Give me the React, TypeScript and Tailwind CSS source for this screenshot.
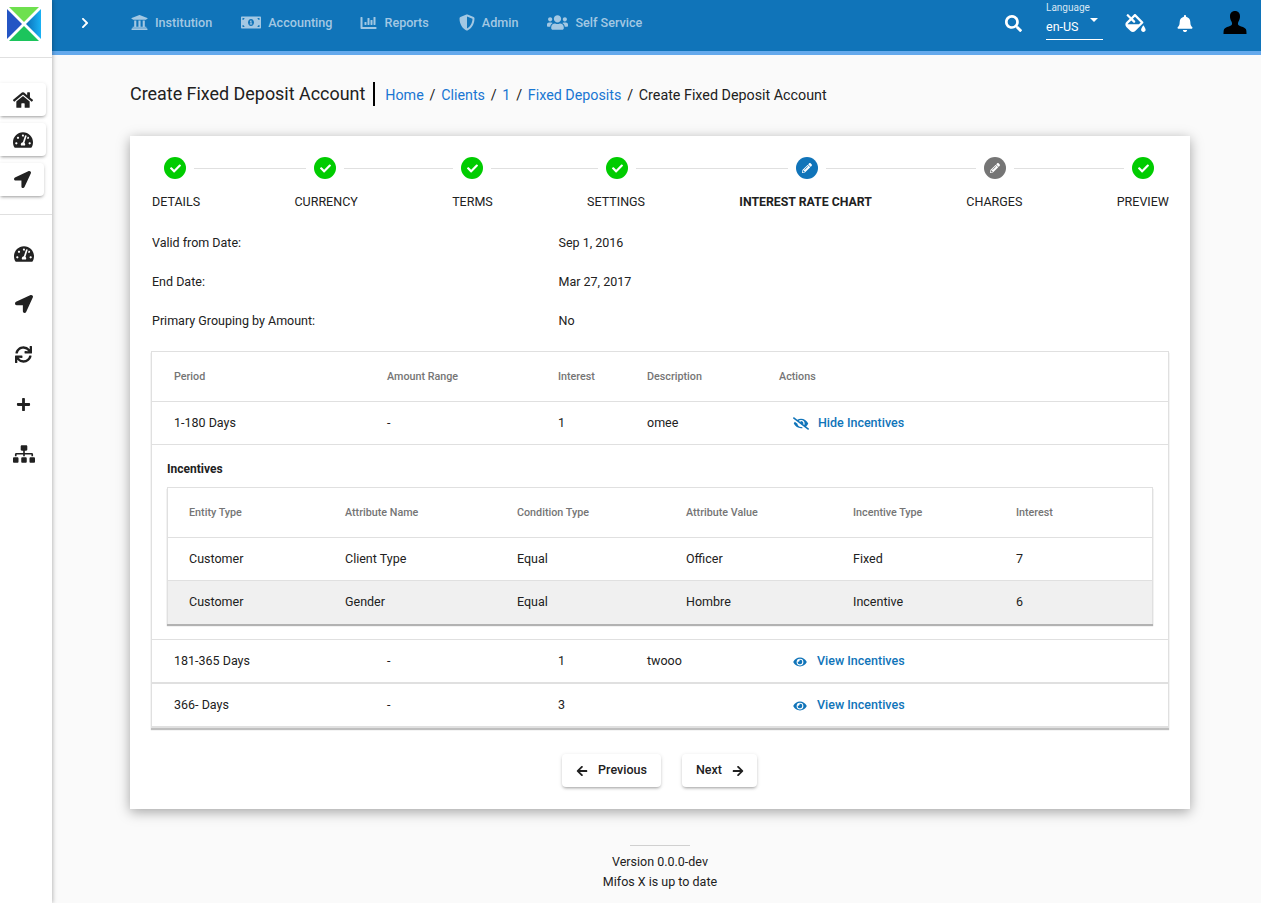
import {
	FaArrowLeft,
	FaArrowRight,
	FaBell,
	FaChartBar,
	FaCheck,
	FaChevronRight,
	FaEye,
	FaEyeSlash,
	FaFillDrip,
	FaHome,
	FaLocationArrow,
	FaMoneyBillAlt,
	FaPencilAlt,
	FaPlus,
	FaSearch,
	FaShieldAlt,
	FaSitemap,
	FaSync,
	FaTachometerAlt,
	FaUniversity,
	FaUsers,
} from "react-icons/fa";

const navItems = [
	{ label: "Institution", icon: FaUniversity, iconClass: "w-[17px] h-[17px]", cls: "ml-0" },
	{ label: "Accounting", icon: FaMoneyBillAlt, iconClass: "w-[20px] h-[17px]", cls: "ml-[29px]" },
	{ label: "Reports", icon: FaChartBar, iconClass: "w-[17px] h-[16px]", cls: "ml-[28px]" },
	{ label: "Admin", icon: FaShieldAlt, iconClass: "w-[16px] h-[17px]", cls: "ml-[30px]" },
	{ label: "Self Service", icon: FaUsers, iconClass: "w-[21px] h-[17px]", cls: "ml-[29px]" },
];

const steps = [
	{ label: "DETAILS", done: true },
	{ label: "CURRENCY", done: true },
	{ label: "TERMS", done: true },
	{ label: "SETTINGS", done: true },
	{ label: "INTEREST RATE CHART", active: true },
	{ label: "CHARGES", pending: true },
	{ label: "PREVIEW", done: true },
];

const lineWidths = ["w-[112px]", "w-[109px]", "w-[107px]", "w-[152px]", "w-[150px]", "w-[110px]"];

const outerCols = "grid grid-cols-[213px_171px_89px_132px_1fr] items-center pl-[22px]";
const innerCols = "grid grid-cols-[156px_172px_169px_167px_163px_1fr] items-center pl-[21px]";

const incentiveRows = [
	["Customer", "Client Type", "Equal", "Officer", "Fixed", "7"],
	["Customer", "Gender", "Equal", "Hombre", "Incentive", "6"],
];

function Logo() {
	return (
		<svg viewBox="0 0 34 34" className="w-[34px] h-[34px]">
			<defs>
				<linearGradient id="logoRight" x1="0" y1="0" x2="1" y2="0">
					<stop offset="0" stopColor="#0b6fb8" />
					<stop offset="1" stopColor="#1ab2f5" />
				</linearGradient>
			</defs>
			<polygon points="2,0 32,0 17,15" fill="#6ee04e" />
			<polygon points="2,34 32,34 17,19" fill="#1cc45c" />
			<polygon points="0,2 0,32 15,17" fill="#2455c4" />
			<polygon points="34,2 34,32 19,17" fill="url(#logoRight)" />
		</svg>
	);
}

function UserSilhouette() {
	return (
		<svg viewBox="0 0 24 24" className="w-[24px] h-[24px]" fill="#000">
			<path d="M12 0c-3.200 0-5 2.100-5 5.200 0 2 .5 3.400 1.200 4.700.4.700.7 1.200.8 2 .2 1.400-.2 2.200-1.500 2.900-1.800.9-5.300 1.600-6.300 3.300C.5 19.400.500 21.500.5 23h23c0-1.500 0-3.600-.7-4.900-1-1.700-4.500-2.400-6.300-3.300-1.300-.7-1.700-1.500-1.500-2.900.1-.8.400-1.300.8-2C16.500 8.600 17 7.200 17 5.200 17 2.100 15.200 0 12 0z" />
		</svg>
	);
}

function Sidebar() {
	const cardIcons = [
		{ icon: FaHome, cls: "w-[20px] h-[18px]", width: "w-[46px]" },
		{ icon: FaTachometerAlt, cls: "w-[20px] h-[18px]", width: "w-[46px]" },
		{ icon: FaLocationArrow, cls: "w-[17px] h-[17px]", width: "w-[44px]" },
	];
	const plainIcons = [
		{ icon: FaTachometerAlt, cls: "w-[20px] h-[18px]" },
		{ icon: FaLocationArrow, cls: "w-[18px] h-[18px]" },
		{ icon: FaSync, cls: "w-[17px] h-[17px]" },
		{ icon: FaPlus, cls: "w-[15px] h-[15px]" },
		{ icon: FaSitemap, cls: "w-[22px] h-[18px]" },
	];
	return (
		<aside className="w-[52px] shrink-0 bg-white shadow-[1px_0_4px_rgba(0,0,0,0.25)] z-10 flex flex-col">
			<div className="h-[58px] border-b border-[#e0e0e0] flex items-center justify-center pr-[5px] pb-[9px]">
				<Logo />
			</div>
			<div className="flex flex-col gap-[7px] pt-[25px] pb-[18px] border-b border-[#e0e0e0]">
				{cardIcons.map((item, i) => {
					const Icon = item.icon;
					return (
						<div
							key={i}
							className={`${item.width} h-[33px] bg-white rounded-r-[4px] shadow-[0_2px_3px_-1px_rgba(0,0,0,0.3),0_1px_4px_rgba(0,0,0,0.12)] flex items-center justify-center text-[#212121]`}
						>
							<Icon className={item.cls} />
						</div>
					);
				})}
			</div>
			<div className="flex flex-col pt-[14px] text-[#212121]">
				{plainIcons.map((item, i) => {
					const Icon = item.icon;
					return (
						<div key={i} className="h-[50px] flex items-center justify-center pr-[5px]">
							<Icon className={item.cls} />
						</div>
					);
				})}
			</div>
		</aside>
	);
}

function Topbar() {
	return (
		<header className="h-[55px] bg-[#1074b9] border-b-[4px] border-[#64a9ec] flex items-center shrink-0 pb-[5px]">
			<FaChevronRight className="ml-[28px] w-[10px] h-[12px] text-white" />
			<nav className="flex items-center ml-[41px]">
				{navItems.map((item) => {
					const Icon = item.icon;
					return (
						<div key={item.label} className={`flex items-center gap-[7px] text-[#a3c8e3] text-[12.6px] font-medium ${item.cls}`}>
							<Icon className={item.iconClass} />
							<span>{item.label}</span>
						</div>
					);
				})}
			</nav>
			<div className="ml-auto flex items-center text-white">
				<FaSearch className="w-[17px] h-[17px]" />
				<div className="ml-[24px] mb-[5px] w-[57px] h-[39px] border-b border-white relative">
					<div className="text-[10px] leading-[12px] mt-[1px] text-[#d6e6f3]">Language</div>
					<div className="text-[12.5px] leading-[14px] mt-[6px]">en-US</div>
					<div className="absolute right-[5px] top-[17px] border-x-[4px] border-x-transparent border-t-[4px] border-t-white" />
				</div>
				<FaFillDrip className="ml-[22px] w-[21px] h-[18px]" />
				<FaBell className="ml-[31px] w-[16px] h-[17px]" />
				<div className="ml-[30px] mr-[14px]">
					<UserSilhouette />
				</div>
			</div>
		</header>
	);
}

function Stepper() {
	return (
		<div>
			<div className="flex items-center h-[22px] pl-[34px]">
				{steps.map((step, i) => (
					<div key={step.label} className="flex items-center">
						<div
							className={`w-[22px] h-[22px] rounded-full flex items-center justify-center text-white ${
								step.active ? "bg-[#1074b9]" : step.pending ? "bg-[#757575]" : "bg-[#00cc00]"
							}`}
						>
							{step.done ? <FaCheck className="w-[11px] h-[11px]" /> : <FaPencilAlt className="w-[10px] h-[10px]" />}
						</div>
						{i < lineWidths.length && <div className={`h-px bg-[#e0e0e0] mx-[8px] ${lineWidths[i]}`} />}
					</div>
				))}
			</div>
			<div className="flex justify-between pl-[22px] pr-[21px] mt-[14px] text-[12.5px] leading-[18px] text-[#212121]">
				{steps.map((step) => (
					<span key={step.label} className={step.active ? "font-bold text-[12.3px]" : ""}>
						{step.label}
					</span>
				))}
			</div>
		</div>
	);
}

function ActionLink({ hide }: { hide?: boolean }) {
	return (
		<div className={`flex items-center pl-[14px] text-[#1074b9] text-[12.5px] font-medium ${hide ? "" : "pt-[1px]"}`}>
			{hide ? <FaEyeSlash className="w-[16px] h-[13px] mr-[9px]" /> : <FaEye className="w-[14px] h-[12px] mr-[10px]" />}
			<span>{hide ? "Hide Incentives" : "View Incentives"}</span>
		</div>
	);
}

function Footer() {
	return (
		<footer className="flex flex-col items-center mt-[36px] pb-[6px] text-[12.5px] leading-[19.5px] text-[#212121]">
			<div className="w-[60px] h-px bg-[#d0d0d0] mb-[6px]" />
			<div>Version 0.0.0-dev</div>
			<div>Mifos X is up to date</div>
		</footer>
	);
}

export default function App() {
	return (
		<div className="flex w-[1261px] h-[903px] overflow-hidden bg-[#fafafa] font-['Roboto',sans-serif] text-[#212121]">
			<Sidebar />
			<div className="flex-1 flex flex-col min-w-0">
				<Topbar />
				<main className="pl-[78px] pr-[71px]">
					<div className="flex items-center h-[24px] mt-[27px]">
						<h1 className="text-[17.92px] leading-[24px] pr-[8px] border-r-2 border-black">Create Fixed Deposit Account</h1>
						<div className="flex items-center ml-[10px] pt-[3px] text-[14.3px] gap-[5.75px]">
							<span className="text-[#1976d2]">Home</span>
							<span>/</span>
							<span className="text-[#1976d2]">Clients</span>
							<span>/</span>
							<span className="text-[#1976d2]">1</span>
							<span>/</span>
							<span className="text-[#1976d2]">Fixed Deposits</span>
							<span>/</span>
							<span>Create Fixed Deposit Account</span>
						</div>
					</div>

					<section className="mt-[30px] h-[673px] bg-white shadow-[0_3px_12px_rgba(0,0,0,0.35)] pt-[21px]">
						<Stepper />

						<div className="px-[22px] mt-[23px] text-[12.5px]">
							<div className="grid grid-cols-[406.5px_1fr] gap-y-[21px] leading-[18px]">
								<div>Valid from Date:</div>
								<div>Sep 1, 2016</div>
								<div>End Date:</div>
								<div>Mar 27, 2017</div>
								<div>Primary Grouping by Amount:</div>
								<div>No</div>
							</div>

							<div className="mt-[21px] -mx-px border border-[#e0e0e0] border-b-0 shadow-[0_2px_1px_rgba(0,0,0,0.25)]">
								<div className={`${outerCols} h-[50px] pt-[2px] border-b border-[#e0e0e0] text-[10.75px] font-medium text-[#757575]`}>
									<div>Period</div>
									<div>Amount Range</div>
									<div>Interest</div>
									<div>Description</div>
									<div>Actions</div>
								</div>
								<div className={`${outerCols} h-[43px] border-b border-[#e0e0e0]`}>
									<div>1-180 Days</div>
									<div>-</div>
									<div>1</div>
									<div>omee</div>
									<ActionLink hide />
								</div>
								<div className="h-[195px] border-b border-[#e0e0e0] px-[15px] pt-[15px]">
									<div className="text-[12px] leading-[18px] font-bold">Incentives</div>
									<div className="mt-[9px] border border-[#e0e0e0] border-b-0 shadow-[0_2px_1px_rgba(0,0,0,0.3)]">
										<div className={`${innerCols} h-[50px] pt-[2px] border-b border-[#e0e0e0] text-[10.75px] font-medium text-[#757575]`}>
											<div>Entity Type</div>
											<div>Attribute Name</div>
											<div>Condition Type</div>
											<div>Attribute Value</div>
											<div>Incentive Type</div>
											<div>Interest</div>
										</div>
										{incentiveRows.map((row, i) => (
											<div
												key={row[1]}
												className={`${innerCols} h-[43px] border-[#e0e0e0] ${i === 1 ? "bg-[#f0f0f0]" : "border-b"}`}
											>
												{row.map((cell, j) => (
													<div key={j}>{cell}</div>
												))}
											</div>
										))}
									</div>
								</div>
								<div className={`${outerCols} h-[44px] border-b-2 border-[#e0e0e0]`}>
									<div>181-365 Days</div>
									<div>-</div>
									<div>1</div>
									<div>twooo</div>
									<ActionLink />
								</div>
								<div className={`${outerCols} h-[44px] border-b-2 border-[#e0e0e0]`}>
									<div>366- Days</div>
									<div>-</div>
									<div>3</div>
									<div></div>
									<ActionLink />
								</div>
							</div>

							<div className="flex justify-center gap-[21px] mt-[26px] pr-[1px] text-[12.5px] font-medium">
								<button className="h-[33px] pl-[14px] pr-[14px] bg-white rounded-[4px] shadow-[0_2px_3px_-1px_rgba(0,0,0,0.3),0_1px_4px_rgba(0,0,0,0.12)] flex items-center gap-[10px]">
									<FaArrowLeft className="w-[12px] h-[12px]" />
									Previous
								</button>
								<button className="h-[33px] pl-[14px] pr-[13px] bg-white rounded-[4px] shadow-[0_2px_3px_-1px_rgba(0,0,0,0.3),0_1px_4px_rgba(0,0,0,0.12)] flex items-center gap-[10px]">
									Next
									<FaArrowRight className="w-[12px] h-[12px]" />
								</button>
							</div>
						</div>
					</section>

					<Footer />
				</main>
			</div>
		</div>
	);
}
